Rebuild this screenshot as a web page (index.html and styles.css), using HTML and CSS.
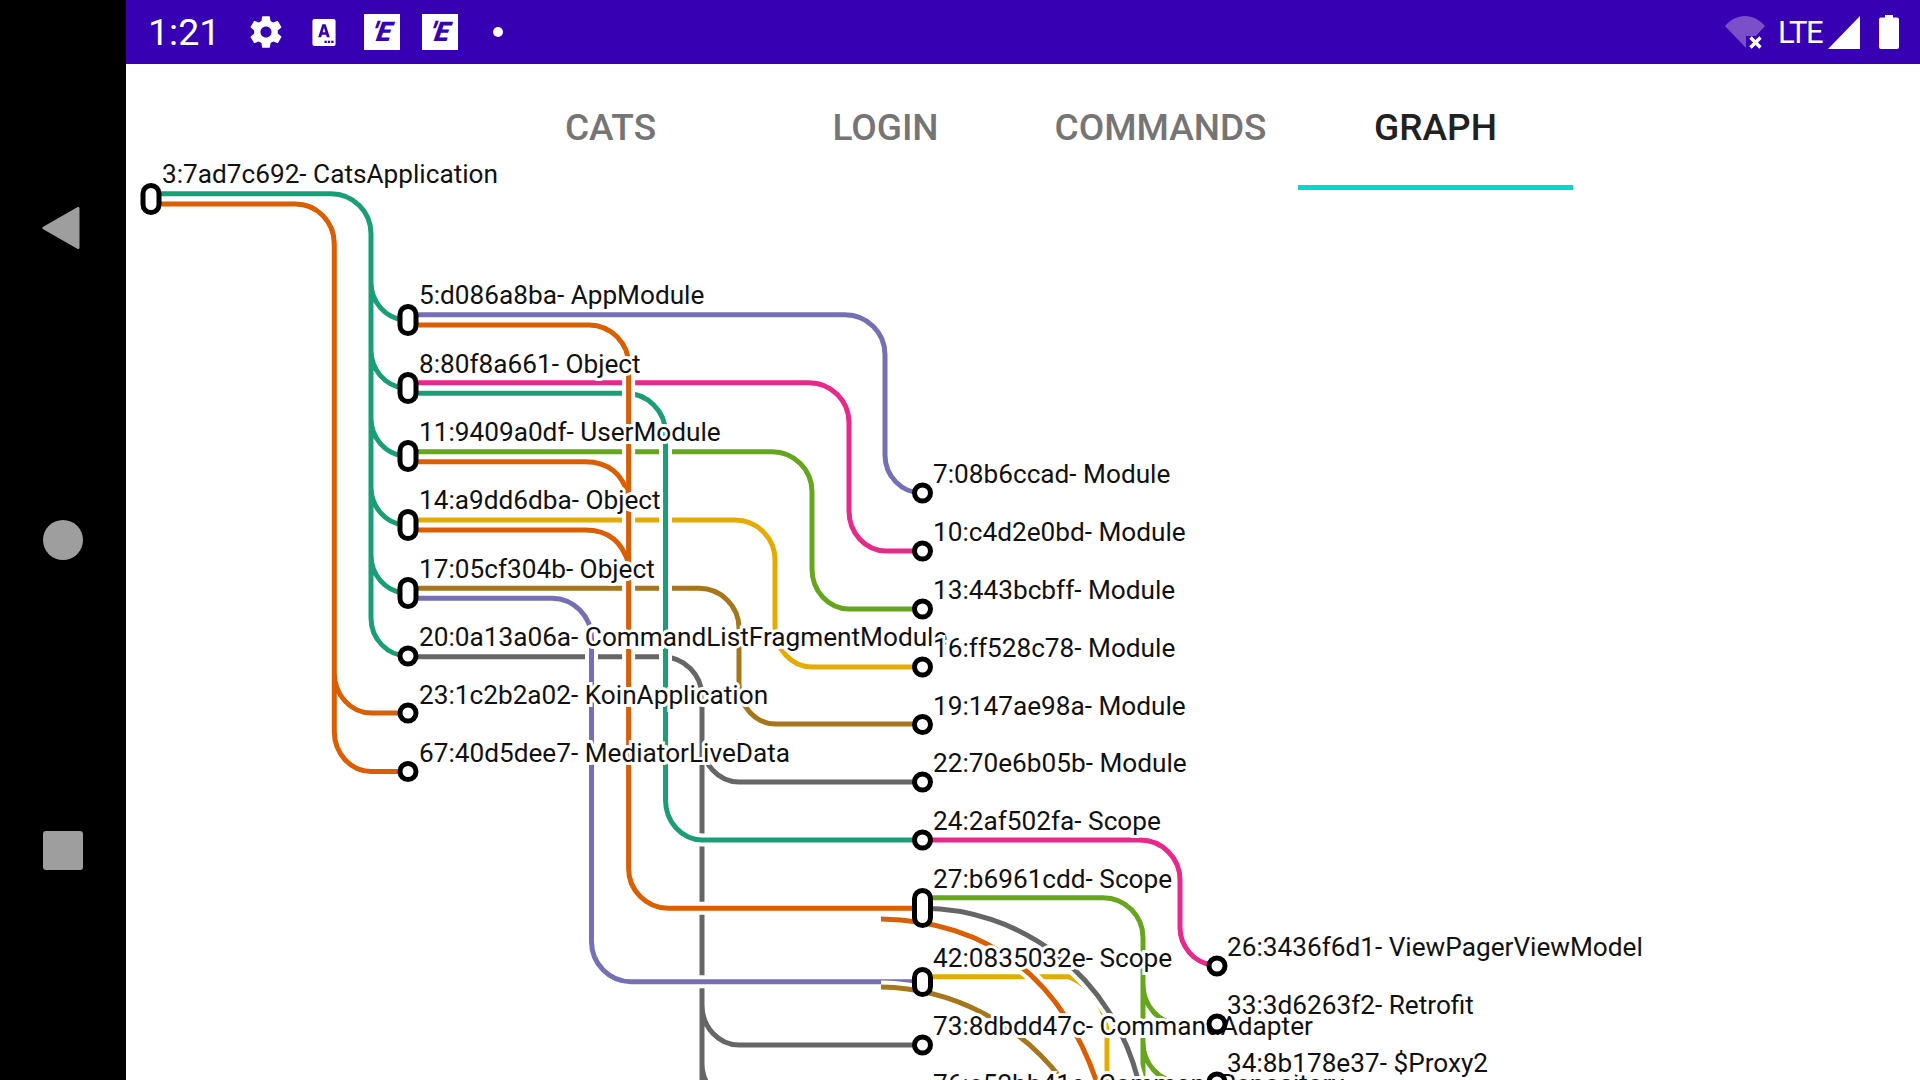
FILE: index.html
```html
<!DOCTYPE html>
<html lang="en">
<head>
  <meta charset="UTF-8" />
  <title>Cats - Graph</title>
  <link rel="stylesheet" href="styles.css">
</head>
<body>
  <nav class="navbar">
    <svg class="nav-back" viewBox="0 0 38 42"><path d="M36 1.5 L36 40.5 L2 21 Z" /></svg>
    <div class="nav-home"></div>
    <div class="nav-recent"></div>
  </nav>

  <div class="screen">
    <header class="status">
      <span class="time">1:21</span>
      <svg class="ic-gear" viewBox="0 0 24 24"><path d="M19.4 13c.04-.33.06-.66.06-1s-.02-.67-.06-1l2.1-1.65c.2-.15.25-.42.12-.64l-2-3.46c-.12-.22-.39-.3-.61-.22l-2.49 1c-.52-.4-1.08-.73-1.69-.98l-.38-2.65C14.46 2.18 14.25 2 14 2h-4c-.25 0-.46.18-.49.42l-.38 2.65c-.61.25-1.17.59-1.69.98l-2.49-1c-.23-.09-.49 0-.61.22l-2 3.46c-.13.22-.07.49.12.64L4.57 11c-.04.33-.07.67-.07 1s.03.67.07 1l-2.11 1.65c-.19.15-.24.42-.12.64l2 3.46c.12.22.39.3.61.22l2.49-1c.52.4 1.08.73 1.69.98l.38 2.65c.03.24.24.42.49.42h4c.25 0 .46-.18.49-.42l.38-2.65c.61-.25 1.17-.59 1.69-.98l2.49 1c.23.09.49 0 .61-.22l2-3.46c.12-.22.07-.49-.12-.64L19.4 13zM12 15.5c-1.93 0-3.5-1.57-3.5-3.5s1.57-3.5 3.5-3.5 3.5 1.57 3.5 3.5-1.57 3.5-3.5 3.5z" /></svg>
      <svg class="ic-a" viewBox="0 0 24 28">
        <rect width="24" height="28" rx="2" fill="#fff" />
        <path d="M6 19 L10.3 5.5 H13.7 L18 19 H14.9 L14.2 16.4 H9.8 L9.1 19 Z M10.6 13.7 H13.4 L12 9 Z" fill="#3700b3" fill-rule="evenodd" />
        <rect x="12.5" y="22.5" width="2.4" height="2.4" fill="#3700b3" />
        <rect x="16" y="22.5" width="2.4" height="2.4" fill="#3700b3" />
        <rect x="19.5" y="22.5" width="2.4" height="2.4" fill="#3700b3" />
      </svg>
      <div class="ic-e"><span>'E</span></div>
      <div class="ic-e"><span>'E</span></div>
      <div class="ic-dot"></div>

      <div class="status-right">
        <svg class="ic-wifi" viewBox="0 0 40 34">
          <path d="M0 11 C11 -2.5 29 -2.5 40 11 L29 23 V33 H21 Z" fill="#7a4fc9" />
          <rect x="21" y="21" width="19" height="13" fill="#3700b3" />
          <path d="M25.5 22.5 L35.5 32.5 M35.5 22.5 L25.5 32.5" stroke="#fff" stroke-width="3.4" />
        </svg>
        <span class="lte">LTE</span>
        <svg class="ic-signal" viewBox="0 0 32 33"><path d="M32 0 V33 H0 Z" /></svg>
        <svg class="ic-battery" viewBox="0 0 20 34"><path d="M6 0 H14 V2.5 H18 A2 2 0 0 1 20 4.5 V32 A2 2 0 0 1 18 34 H2 A2 2 0 0 1 0 32 V4.5 A2 2 0 0 1 2 2.5 H6 Z" /></svg>
      </div>
    </header>

    <div class="tabs">
      <div class="tab">Cats</div>
      <div class="tab">Login</div>
      <div class="tab">Commands</div>
      <div class="tab active">Graph</div>
    </div>

    <div class="graph">
      <!-- viewBox keeps the window's own coordinates, the graph starts under the tabs -->
      <svg viewBox="126 190 1794 890">
        <defs>
          <path id="e-gray" d="M408 656.7 H662 A40 40 0 0 1 702 697 V1090 M702 742 A37 40 0 0 0 739 782 H922 M702 1005 A37 40 0 0 0 739 1045 H922 M702 1063 A37 40 0 0 0 739 1103 H922" />
          <path id="e-yellow14" d="M408 520 H735 A40 40 0 0 1 775 560 V627 A37 40 0 0 0 812 667 H922" />
          <path id="e-green11" d="M408 451.7 H772 A40 40 0 0 1 812 492 V569 A37 40 0 0 0 849 609 H922" />
          <path id="e-brown17" d="M408 588.3 H699 A40 40 0 0 1 739 628 V684 A37 40 0 0 0 776 724 H922" />
          <path id="e-pink8" d="M408 382.7 H809 A40 40 0 0 1 849 423 V511 A37 40 0 0 0 886 551 H922" />
          <path id="e-purple5" d="M408 314.7 H845 A40 40 0 0 1 885 355 V455 A37 38 0 0 0 922 493" />
          <path id="e-teal8" d="M408 393.3 H625 A40 40 0 0 1 665.5 433 V800 A37 40 0 0 0 702.5 840 H922" />
          <path id="e-purple17" d="M408 598.3 H552 A40 40 0 0 1 591.5 638 V942 A40 40 0 0 0 631 981.7 H922" />
          <path id="e-orange" d="M408 325 H589 A40 40 0 0 1 628.6 365 V868 A40 40 0 0 0 668 908.3 H922 M408 461.7 H585 C610 461.7 622 475 628.6 495 M408 530 H585 C610 530 622 543 628.6 563" />
          <path id="e-root-orange" d="M151 204 H295 A39 40 0 0 1 334.3 244 V731 A37 40 0 0 0 371 771.5 H408 M334.3 673 A37 40 0 0 0 371 713 H408" />
          <path id="e-root-teal" d="M151 193.7 H331 A40 40 0 0 1 371 234 V618 A37 38 0 0 0 408 656 M371 282 A37 38 0 0 0 404 320 M371 350 A37 38 0 0 0 404 388 M371 418 A37 38 0 0 0 404 456 M371 487 A37 38 0 0 0 404 525 M371 555 A37 38 0 0 0 404 593" />
          <path id="e-yellow42" d="M922 976.7 H1068 Q1092 985 1104 1015 L1107 1030 V1090" />
          <path id="e-pink24" d="M922 840 H1140 A40 40 0 0 1 1180 880 V927 A37 38 0 0 0 1213 965" />
          <path id="e-green27" d="M922 897.7 H1103 A40 40 0 0 1 1143 938 V1090 M1143 984 A37 40 0 0 0 1180 1024 H1217 M1143 1042 A37 40 0 0 0 1180 1082 H1217" />
          <path id="e-gray27" d="M922 908.3 C1015 908 1115 970 1141 1092" />
          <path id="e-orange27" d="M881 919 C990 921 1065 980 1100 1092" />
          <path id="e-brown42" d="M881 987 C950 988 1022 1022 1068 1088" />
        </defs>

        <g class="edges">
          <use href="#e-gray" class="halo" /><use href="#e-gray" class="gray" />
          <use href="#e-yellow14" class="halo" /><use href="#e-yellow14" class="yellow" />
          <use href="#e-green11" class="halo" /><use href="#e-green11" class="green" />
          <use href="#e-brown17" class="halo" /><use href="#e-brown17" class="brown" />
          <use href="#e-pink8" class="halo" /><use href="#e-pink8" class="pink" />
          <use href="#e-purple5" class="halo" /><use href="#e-purple5" class="purple" />
          <use href="#e-teal8" class="halo" /><use href="#e-teal8" class="teal" />
          <use href="#e-purple17" class="halo" /><use href="#e-purple17" class="purple" />
          <use href="#e-orange" class="halo" /><use href="#e-orange" class="orange" />
          <use href="#e-root-orange" class="halo" /><use href="#e-root-orange" class="orange" />
          <use href="#e-root-teal" class="halo" /><use href="#e-root-teal" class="teal" />
          <use href="#e-yellow42" class="halo" /><use href="#e-yellow42" class="yellow" />
          <use href="#e-pink24" class="halo" /><use href="#e-pink24" class="pink" />
          <use href="#e-green27" class="halo" /><use href="#e-green27" class="green" />
          <use href="#e-gray27" class="halo" /><use href="#e-gray27" class="gray" />
          <use href="#e-orange27" class="halo" /><use href="#e-orange27" class="orange" />
          <use href="#e-brown42" class="halo" /><use href="#e-brown42" class="brown" />
        </g>

        <g class="labels">
          <text x="162" y="183">3:7ad7c692- CatsApplication</text>
          <text x="419" y="304">5:d086a8ba- AppModule</text>
          <text x="419" y="373">8:80f8a661- Object</text>
          <text x="419" y="441">11:9409a0df- UserModule</text>
          <text x="419" y="509">14:a9dd6dba- Object</text>
          <text x="419" y="578">17:05cf304b- Object</text>
          <text x="419" y="646">20:0a13a06a- CommandListFragmentModule</text>
          <text x="419" y="704">23:1c2b2a02- KoinApplication</text>
          <text x="419" y="762">67:40d5dee7- MediatorLiveData</text>
          <text x="933" y="483">7:08b6ccad- Module</text>
          <text x="933" y="541">10:c4d2e0bd- Module</text>
          <text x="933" y="599">13:443bcbff- Module</text>
          <text x="933" y="657">16:ff528c78- Module</text>
          <text x="933" y="715">19:147ae98a- Module</text>
          <text x="933" y="772">22:70e6b05b- Module</text>
          <text x="933" y="830">24:2af502fa- Scope</text>
          <text x="933" y="888">27:b6961cdd- Scope</text>
          <text x="933" y="967">42:0835032e- Scope</text>
          <text x="933" y="1035">73:8dbdd47c- CommandAdapter</text>
          <text x="933" y="1093">76:e52bb41c- CommandRepository</text>
          <text x="1227" y="956">26:3436f6d1- ViewPagerViewModel</text>
          <text x="1227" y="1014">33:3d6263f2- Retrofit</text>
          <text x="1227" y="1072">34:8b178e37- $Proxy2</text>
        </g>

        <g class="nodes">
          <rect x="143" y="185.5" width="16" height="27" rx="8" />
          <rect x="400" y="306.5" width="16" height="27" rx="8" />
          <rect x="400" y="374.5" width="16" height="27" rx="8" />
          <rect x="400" y="442.5" width="16" height="27" rx="8" />
          <rect x="400" y="511.5" width="16" height="27" rx="8" />
          <rect x="400" y="579.5" width="16" height="27" rx="8" />
          <circle cx="408" cy="656" r="8" />
          <circle cx="408" cy="713" r="8" />
          <circle cx="408" cy="771.5" r="8" />
          <circle cx="922.5" cy="493" r="8" />
          <circle cx="922.5" cy="551" r="8" />
          <circle cx="922.5" cy="609" r="8" />
          <circle cx="922.5" cy="667" r="8" />
          <circle cx="922.5" cy="724.5" r="8" />
          <circle cx="922.5" cy="782" r="8" />
          <circle cx="922.5" cy="840" r="8" />
          <rect x="914.5" y="890.5" width="16" height="35" rx="8" />
          <rect x="914.5" y="969.5" width="16" height="25" rx="8" />
          <circle cx="922.5" cy="1045" r="8" />
          <circle cx="1217" cy="966" r="8" />
          <circle cx="1217" cy="1024" r="8" />
          <circle cx="1217" cy="1082" r="8" />
        </g>
      </svg>
    </div>
  </div>
</body>
</html>
```

FILE: styles.css
```css
html, body {
  height: 100%;
}
body {
  margin: 0;
  display: flex;
  overflow: hidden;
  background: white;
  font-family: Roboto, sans-serif;
}

/* left nav bar */
.navbar {
  width: 126px;
  box-sizing: border-box;
  padding-bottom: 3px;
  flex: none;
  background: black;
  display: flex;
  flex-direction: column;
  align-items: center;
  justify-content: center;
  gap: 271px;
}
.nav-back {
  width: 38px;
  height: 42px;
  margin-right: 5px;
  fill: #9e9e9e;
  stroke: #9e9e9e;
  stroke-width: 3;
  stroke-linejoin: round;
}
.nav-home {
  width: 40px;
  height: 40px;
  border-radius: 50%;
  background: #9e9e9e;
}
.nav-recent {
  width: 40px;
  height: 39px;
  border-radius: 3px;
  background: #9e9e9e;
}

.screen {
  flex: 1;
  min-width: 0;
  display: flex;
  flex-direction: column;
}

/* status bar */
.status {
  height: 64px;
  flex: none;
  background: #3700b3;
  color: white;
  display: flex;
  align-items: center;
  padding: 0 21px 0 22px;
}
.time {
  font-size: 37.5px;
  width: 99px;
}
.ic-gear {
  width: 38px;
  height: 38px;
  fill: white;
  margin-right: 27px;
}
.ic-a {
  width: 24px;
  height: 27px;
  margin-right: 28px;
}
.ic-e {
  width: 36px;
  height: 36px;
  background: white;
  color: #3700b3;
  font-size: 27px;
  font-weight: 900;
  font-style: italic;
  display: flex;
  align-items: center;
  justify-content: center;
  margin-right: 22px;
}
.ic-e span {
  transform: skewX(-10deg);
}
.ic-dot {
  width: 10px;
  height: 10px;
  border-radius: 50%;
  background: white;
  margin-left: 13px;
}
.status-right {
  margin-left: auto;
  display: flex;
  align-items: center;
}
.ic-wifi {
  width: 40px;
  height: 34px;
  margin-right: 13px;
}
.lte {
  font-size: 31px;
  letter-spacing: -1.5px;
  width: 44px;
  margin-right: 6px;
}
.ic-signal {
  width: 32px;
  height: 33px;
  fill: white;
  margin-right: 19px;
}
.ic-battery {
  width: 20px;
  height: 34px;
  fill: white;
}

/* tabs */
.tabs {
  height: 126px;
  flex: none;
  display: flex;
  justify-content: center;
}
.tab {
  width: 275px;
  box-sizing: border-box;
  display: flex;
  align-items: center;
  justify-content: center;
  padding-top: 1px;
  font-size: 37px;
  font-weight: 500;
  text-transform: uppercase;
  color: #757575;
}
.tab.active {
  color: #212121;
  border-bottom: 5px solid #00dac8;
  padding-top: 6px;
}

/* graph */
.graph {
  flex: 1;
  min-height: 0;
}
.graph svg {
  display: block;
  width: 100%;
  height: 100%;
  overflow: visible;
}
.edges use {
  fill: none;
  stroke-width: 5;
}
.edges .halo {
  stroke: white;
  stroke-width: 13;
}
.teal { stroke: #1b9e77; }
.orange { stroke: #d95f02; }
.purple { stroke: #7570b3; }
.pink { stroke: #e7298a; }
.green { stroke: #66a61e; }
.yellow { stroke: #e6ab02; }
.brown { stroke: #a6761d; }
.gray { stroke: #666666; }

.labels text {
  font-size: 26.2px;
  fill: #111;
  stroke: white;
  stroke-width: 6;
  paint-order: stroke;
}
.nodes rect, .nodes circle {
  fill: white;
  stroke: black;
  stroke-width: 5;
}
```
